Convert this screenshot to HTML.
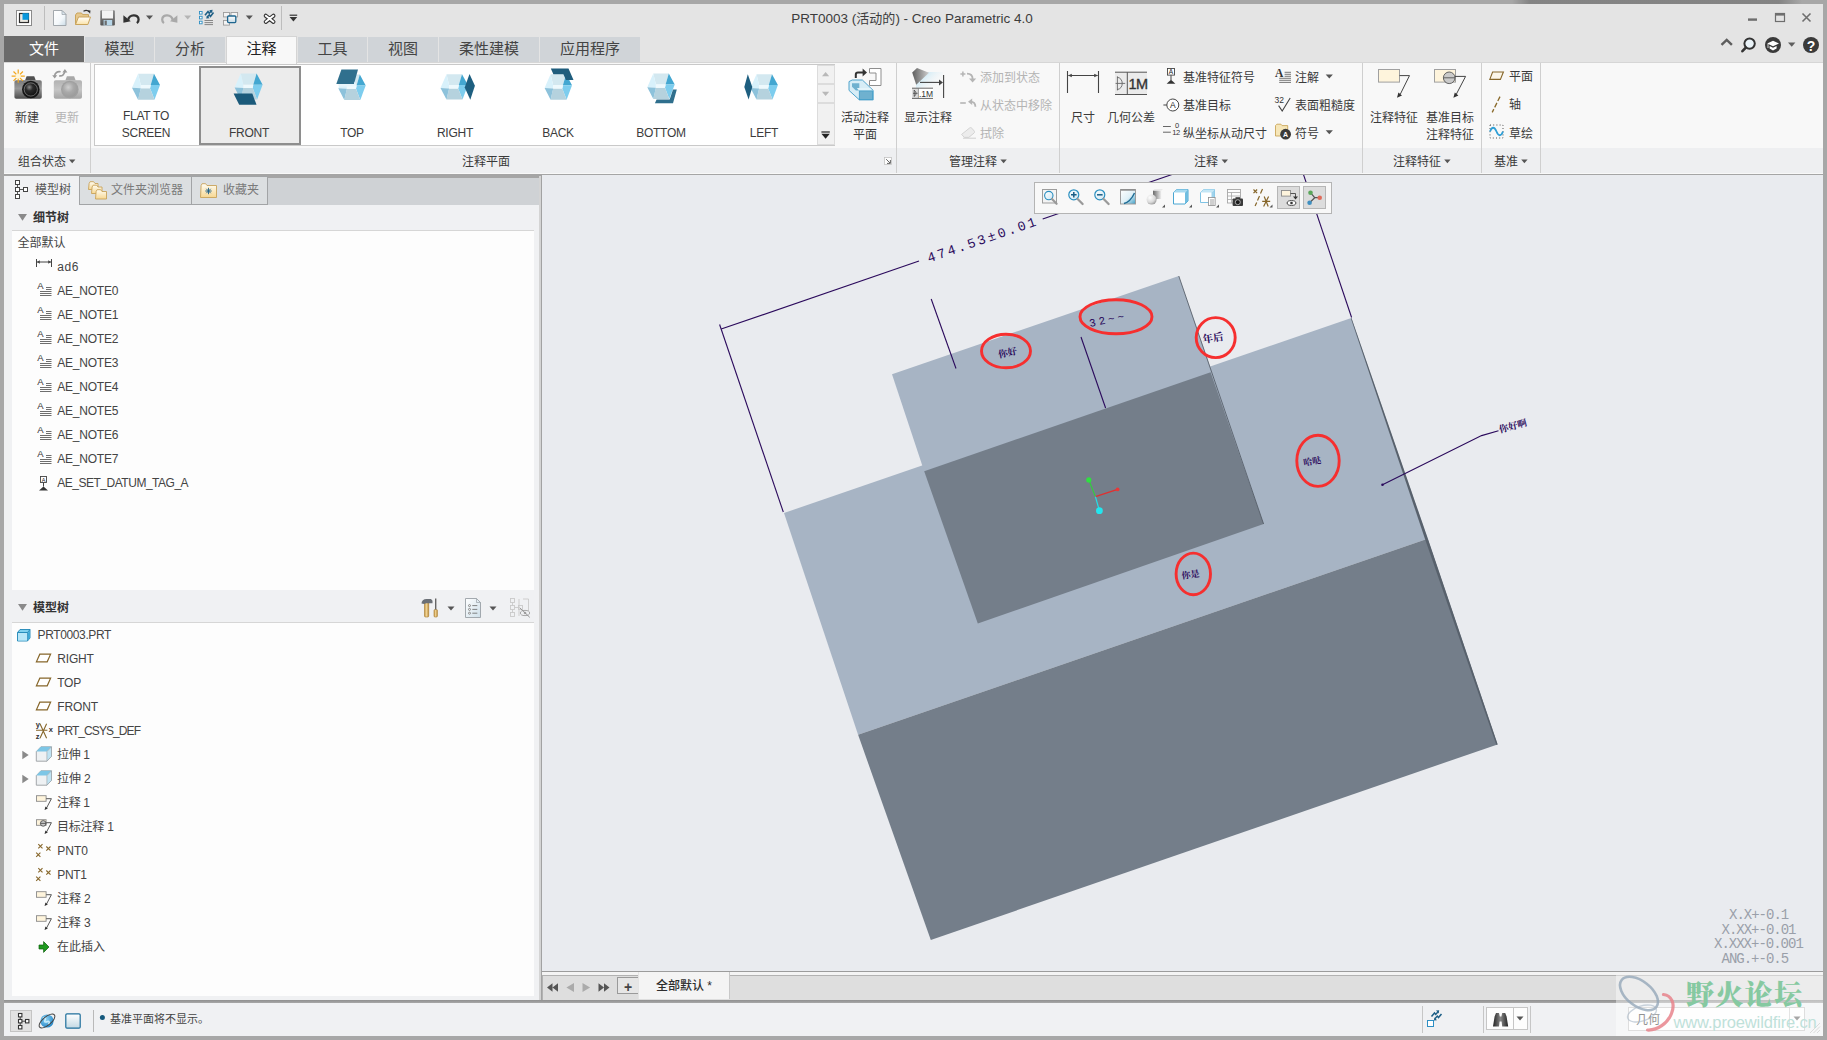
<!DOCTYPE html>
<html lang="zh-CN"><head><meta charset="utf-8"><title>PRT0003 - Creo Parametric 4.0</title>
<style>
*{box-sizing:border-box;margin:0;padding:0}
html,body{width:1827px;height:1040px;overflow:hidden}
body{position:relative;background:#a7a7a7;font-family:"Liberation Sans","Noto Sans CJK SC",sans-serif;font-size:12px;color:#3a3a3a;line-height:16px}
.a{position:absolute}
.t{position:absolute;white-space:nowrap;line-height:16px;height:16px;margin-top:1px}
.c{text-align:center}
.dis{color:#b4b4b4}
.sep{position:absolute;width:1px;background:#cfcfcf}
svg{position:absolute;overflow:visible}
.tab{position:absolute;top:37px;height:25px;background:#d0d4d8;text-align:center;font-size:15px;line-height:24px;color:#444}
.gl{position:absolute;white-space:nowrap;line-height:16px;height:16px;top:154px;text-align:center}
.row{position:absolute;white-space:nowrap;line-height:16px;height:16px;font-size:12.5px}
.gal{margin-top:0;font-size:12px;color:#3c3c3c;letter-spacing:-0.25px}

</style></head>
<body>
<!-- window frame -->
<div class="a" style="left:4px;top:4px;width:1819px;height:1032px;background:#e4e4e4"></div>
<!-- shadow strip on top border -->
<div class="a" style="left:1512px;top:0;width:290px;height:4px;background:linear-gradient(90deg,rgba(120,120,120,0),rgba(120,120,120,0.75) 6%,rgba(120,120,120,0.75) 92%,rgba(120,120,120,0))"></div>
<!-- title text -->
<div class="t c" id="title" style="left:712px;top:9px;width:400px;font-size:13.5px;line-height:18px;height:18px;color:#3c3c3c">PRT0003 (<span style="font-size:13px">活动的</span>) - Creo Parametric 4.0</div>
<!-- ribbon tabs -->
<div class="tab" style="left:4px;width:80px;background:#6a6a6a;color:#fff;top:36px;height:26px;line-height:25px">文件</div>
<div class="tab" style="left:85px;width:69px">模型</div>
<div class="tab" style="left:155px;width:70px">分析</div>
<div class="tab" style="left:226px;width:71px;background:#f8f8f8;color:#222;top:36px;height:27px;border:1px solid #d4d4d4;border-bottom:none;line-height:24px">注释</div>
<div class="tab" style="left:298px;width:69px">工具</div>
<div class="tab" style="left:368px;width:70px">视图</div>
<div class="tab" style="left:439px;width:100px">柔性建模</div>
<div class="tab" style="left:540px;width:100px">应用程序</div>
<!-- ribbon body -->
<div class="a" style="left:4px;top:62px;width:1819px;height:112px;background:#f8f8f8;border-top:1px solid #d6d6d6"></div>
<div class="a" style="left:226px;top:62px;width:71px;height:2px;background:#f8f8f8;border-left:1px solid #d4d4d4;border-right:1px solid #d4d4d4"></div>
<div class="a" style="left:4px;top:148px;width:1819px;height:25px;background:#eeeff1"></div>
<!-- quick access toolbar + window buttons -->
<svg class="a" style="left:0;top:0" width="1827" height="62" viewBox="0 0 1827 62">
<defs>
<linearGradient id="gdoc" x1="0" y1="0" x2="1" y2="1"><stop offset="0" stop-color="#ffffff"/><stop offset="0.6" stop-color="#f4f8fb"/><stop offset="1" stop-color="#c9dbe6"/></linearGradient>
<linearGradient id="gfold" x1="0" y1="0" x2="0" y2="1"><stop offset="0" stop-color="#ffffff"/><stop offset="1" stop-color="#fbe3a8"/></linearGradient>
<linearGradient id="gsave" x1="0" y1="0" x2="0" y2="1"><stop offset="0" stop-color="#8c8c8c"/><stop offset="1" stop-color="#555"/></linearGradient>
<linearGradient id="gwin" x1="0" y1="0" x2="0" y2="1"><stop offset="0" stop-color="#ffffff"/><stop offset="1" stop-color="#c4d9e4"/></linearGradient>
</defs>
<!-- app icon -->
<rect x="16.5" y="10.5" width="15" height="15" fill="#fff" stroke="#8a8a8a"/>
<rect x="19.5" y="13.5" width="9" height="9" fill="#ece9e2" stroke="#2e2e2e" stroke-width="1.2"/>
<rect x="22.5" y="13.2" width="6.3" height="6.6" fill="#0a98dc"/>
<rect x="44" y="6" width="1" height="24" fill="#bdbdbd"/>
<!-- new doc -->
<path d="M53.5 10.5h8.5l4 4v11h-12.5z" fill="url(#gdoc)" stroke="#9aa0a6" stroke-width="0.9"/>
<path d="M62 10.5v4h4z" fill="#dbe6ee" stroke="#9aa0a6" stroke-width="0.7"/>
<!-- open folder -->
<path d="M75.5 24.5v-9.5l1.5-2h4.5l1.2 1.6h5.8v3" fill="#e6c88e" stroke="#c9a45c"/>
<path d="M75.5 24.5l3-7.5h12l-2.6 7.5z" fill="url(#gfold)" stroke="#c9a45c"/>
<path d="M83.5 11.2c2.2-1.2 4.4-.8 5.6.6" fill="none" stroke="#333" stroke-width="1.3"/>
<path d="M87.3 10.2l3.2.2-.4 3.4z" fill="#333"/>
<!-- save -->
<rect x="100.3" y="10.3" width="14.6" height="15.2" rx="1" fill="url(#gsave)"/>
<rect x="102" y="10.3" width="11" height="8.2" fill="#f3f3f3"/>
<rect x="103.6" y="20" width="8.6" height="5.5" fill="#b7d6e8"/>
<rect x="104.6" y="20.6" width="2.2" height="4.4" fill="#6d6d6d"/>
<!-- undo -->
<path d="M128.200 20c.400-5.800 10.400-6.600 10.400-.400c0 1.600-.600 2.700-1.700 3.500" fill="none" stroke="#333" stroke-width="2.300"/>
<path d="M123.400 15.200v7.600l7.400-1.600z" fill="#333"/>
<path d="M146 15.600h7l-3.500 4z" fill="#555"/>
<!-- redo (disabled) -->
<path d="M172.600 20c-.400-5.800-10.400-6.600-10.400-.400c0 1.600.600 2.700 1.700 3.500" fill="none" stroke="#a9a9a9" stroke-width="2.300"/>
<path d="M177.400 15.200v7.600l-7.400-1.600z" fill="#a9a9a9"/>
<path d="M184.200 15.600h7l-3.500 4z" fill="#b5b5b5"/>
<!-- regenerate -->
<g fill="#fff" stroke="#2d8fc4" stroke-width="0.9"><rect x="199.5" y="11.5" width="2.6" height="2.6"/><rect x="199.5" y="16.3" width="2.6" height="2.6"/><rect x="199.5" y="21.2" width="2.6" height="2.6"/></g>
<g stroke="#7a7a7a" stroke-width="0.9"><path d="M204.5 20.5h8.5M204.5 22.6h8.5M204.5 24.6h8.5"/></g>
<path d="M205 15.2l3-3.6 1.2 1.6 2.4-2.8M213.5 12.6l-3 3.8-1.2-1.6-2.2 2.4" fill="none" stroke="#1d5f86" stroke-width="1.6"/>
<path d="M209.2 10.2l3.4-.4-.6 3.4zM209.6 18.2l-3.4.4.8-3.2z" fill="#1d5f86"/>
<!-- windows -->
<g fill="#f4f4f4" stroke="#9b9b9b" stroke-width="0.9"><rect x="223.5" y="12.5" width="6" height="4.4"/><rect x="231" y="12.5" width="6.6" height="4.4"/><rect x="223.5" y="20.5" width="6" height="4.6"/></g>
<rect x="227.6" y="16" width="8.2" height="6.6" rx="1" fill="url(#gwin)" stroke="#1e668f" stroke-width="1.3"/>
<path d="M245.8 15.6h7l-3.5 4z" fill="#555"/>
<!-- close x -->
<path d="M265.800 15.800l7.600 6M273.400 15.800l-7.600 6" stroke="#333" stroke-width="4.200" stroke-linecap="round"/>
<path d="M265.800 15.800l7.600 6M273.400 15.800l-7.600 6" stroke="#fff" stroke-width="2" stroke-linecap="round"/>
<rect x="281" y="6" width="1" height="24" fill="#bdbdbd"/>
<rect x="289.6" y="14.6" width="7.6" height="1.2" fill="#333"/>
<path d="M289.6 17h7.6l-3.8 4.6z" fill="#333"/>
<!-- window buttons -->
<rect x="1748" y="18.400" width="9" height="2.400" fill="#6e6e6e"/>
<rect x="1775.5" y="13.5" width="9" height="8" fill="none" stroke="#6e6e6e" stroke-width="1.2"/><rect x="1775" y="13" width="10" height="2.6" fill="#6e6e6e"/>
<path d="M1802.5 13.5l8 8M1810.5 13.5l-8 8" stroke="#6e6e6e" stroke-width="1.6"/>
<!-- help row -->
<path d="M1721.5 44.8l5.2-5 5.2 5" fill="none" stroke="#5e5e5e" stroke-width="2.4"/>
<circle cx="1749.6" cy="43.6" r="5.2" fill="#eaf3f8" stroke="#333" stroke-width="2"/>
<path d="M1745.8 47.6l-3.4 3.6" stroke="#333" stroke-width="2.6" stroke-linecap="round"/>
<circle cx="1773" cy="45" r="8" fill="#3a3a3a"/>
<path d="M1767.2 43.4l5.8-2.6 6 2.6-6 2.8z" fill="#fff"/>
<path d="M1769.6 46v2.6l3.4 1.8 3.6-1.8v-2.6l-3.6 1.8z" fill="#fff"/>
<path d="M1768 44v4" stroke="#fff" stroke-width="0.8"/>
<path d="M1788 42.6h7.4l-3.7 4.2z" fill="#5e5e5e"/>
<circle cx="1811" cy="45" r="8" fill="#3a3a3a"/>
</svg>
<div class="t c" style="left:1803px;top:36px;width:16px;font-size:14px;font-weight:bold;color:#fff;line-height:18px;height:18px">?</div>
<!-- annotation plane gallery -->
<div class="a" style="left:94px;top:64px;width:741px;height:82px;background:#fff;border:1px solid #c9c9c9"></div>
<div class="a" style="left:199px;top:66px;width:102px;height:79px;background:#ececec;border:2px solid #8e8e8e"></div>
<svg class="a" style="left:0;top:62px" width="900" height="90" viewBox="0 62 900 90">
<polygon points="138.1,73.7 154.0,73.7 150.7,84.9 140.8,84.9" fill="#d3e8f0"/><polygon points="132.0,87.7 138.1,73.7 140.8,84.9 140.8,88.2" fill="#d8f1fb"/><polygon points="154.0,73.7 160.0,84.9 150.7,84.9" fill="#43a7d1"/><polygon points="150.7,84.9 160.0,84.9 154.5,99.7 150.1,88.2" fill="#7dcdee"/><polygon points="140.8,88.2 150.1,88.2 154.5,99.7 138.1,99.7" fill="#b5d2de"/><polygon points="132.0,87.7 140.8,88.2 138.1,99.7" fill="#8dc2db"/><polygon points="140.8,84.9 150.7,84.9 150.1,88.2 140.8,88.2" fill="#eef9fd"/>
<polygon points="240.7,73.5 256.6,73.5 253.3,84.7 243.4,84.7" fill="#d3e8f0"/><polygon points="234.6,87.5 240.7,73.5 243.4,84.7 243.4,88.0" fill="#d8f1fb"/><polygon points="256.6,73.5 262.6,84.7 253.3,84.7" fill="#43a7d1"/><polygon points="253.3,84.7 262.6,84.7 257.1,99.5 252.7,88.0" fill="#7dcdee"/><polygon points="243.4,88.0 252.7,88.0 257.1,99.5 240.7,99.5" fill="#b5d2de"/><polygon points="234.6,87.5 243.4,88.0 240.7,99.5" fill="#8dc2db"/><polygon points="243.4,84.7 253.3,84.7 252.7,88.0 243.4,88.0" fill="#eef9fd"/>
<polygon points="233.6,93.4 252.3,93.4 256.5,104.8 239.2,104.8" fill="#1b5a7a"/>
<polygon points="344.3,74.5 359.8,74.5 356.6,85.4 346.9,85.4" fill="#d3e8f0"/><polygon points="338.3,88.2 344.3,74.5 346.9,85.4 346.9,88.7" fill="#d8f1fb"/><polygon points="359.8,74.5 365.7,85.4 356.6,85.4" fill="#43a7d1"/><polygon points="356.6,85.4 365.7,85.4 360.3,99.9 356.0,88.7" fill="#7dcdee"/><polygon points="346.9,88.7 356.0,88.7 360.3,99.9 344.3,99.9" fill="#b5d2de"/><polygon points="338.3,88.2 346.9,88.7 344.3,99.9" fill="#8dc2db"/><polygon points="346.9,85.4 356.6,85.4 356.0,88.7 346.9,88.7" fill="#eef9fd"/>
<polygon points="341.4,69.6 358.0,69.6 354.0,84.0 336.3,84.0" fill="#30708e"/>
<polygon points="338.5,84.0 354.0,84.0 354.6,81.6 356.2,84.6 354.2,86.6 338.5,86.6" fill="#e6f5fb"/>
<polygon points="446.5,74.2 462.0,74.2 458.8,85.1 449.1,85.1" fill="#d3e8f0"/><polygon points="440.5,87.9 446.5,74.2 449.1,85.1 449.1,88.4" fill="#d8f1fb"/><polygon points="462.0,74.2 467.9,85.1 458.8,85.1" fill="#43a7d1"/><polygon points="458.8,85.1 467.9,85.1 462.5,99.6 458.2,88.4" fill="#7dcdee"/><polygon points="449.1,88.4 458.2,88.4 462.5,99.6 446.5,99.6" fill="#b5d2de"/><polygon points="440.5,87.9 449.1,88.4 446.5,99.6" fill="#8dc2db"/><polygon points="449.1,85.1 458.8,85.1 458.2,88.4 449.1,88.4" fill="#eef9fd"/>
<polygon points="469.5,73.9 474.9,85.8 470.3,99.7 464.7,87.4" fill="#1e5f80"/>
<polygon points="550.6,74.3 566.1,74.3 562.9,85.2 553.2,85.2" fill="#d3e8f0"/><polygon points="544.6,88.0 550.6,74.3 553.2,85.2 553.2,88.5" fill="#d8f1fb"/><polygon points="566.1,74.3 572.0,85.2 562.9,85.2" fill="#43a7d1"/><polygon points="562.9,85.2 572.0,85.2 566.6,99.7 562.3,88.5" fill="#7dcdee"/><polygon points="553.2,88.5 562.3,88.5 566.6,99.7 550.6,99.7" fill="#b5d2de"/><polygon points="544.6,88.0 553.2,88.5 550.6,99.7" fill="#8dc2db"/><polygon points="553.2,85.2 562.9,85.2 562.3,88.5 553.2,88.5" fill="#eef9fd"/>
<polygon points="550.8,68.5 568.5,68.5 573.5,80.0 566.0,80.0 563.4,74.3 553.4,74.3" fill="#1f5d7d"/>
<polygon points="653.3,73.5 668.8,73.5 665.6,84.4 655.9,84.4" fill="#d3e8f0"/><polygon points="647.3,87.2 653.3,73.5 655.9,84.4 655.9,87.7" fill="#d8f1fb"/><polygon points="668.8,73.5 674.7,84.4 665.6,84.4" fill="#43a7d1"/><polygon points="665.6,84.4 674.7,84.4 669.3,98.9 665.0,87.7" fill="#7dcdee"/><polygon points="655.9,87.7 665.0,87.7 669.3,98.9 653.3,98.9" fill="#b5d2de"/><polygon points="647.3,87.2 655.9,87.7 653.3,98.9" fill="#8dc2db"/><polygon points="655.9,84.4 665.6,84.4 665.0,87.7 655.9,87.7" fill="#eef9fd"/>
<polygon points="676.8,89.4 673.0,103.3 654.9,103.3 656.6,99.5 669.7,99.5 673.0,89.4" fill="#2f6f8d"/>
<polygon points="756.5,74.2 772.0,74.2 768.8,85.1 759.1,85.1" fill="#d3e8f0"/><polygon points="750.5,87.9 756.5,74.2 759.1,85.1 759.1,88.4" fill="#d8f1fb"/><polygon points="772.0,74.2 777.9,85.1 768.8,85.1" fill="#43a7d1"/><polygon points="768.8,85.1 777.9,85.1 772.5,99.6 768.2,88.4" fill="#7dcdee"/><polygon points="759.1,88.4 768.2,88.4 772.5,99.6 756.5,99.6" fill="#b5d2de"/><polygon points="750.5,87.9 759.1,88.4 756.5,99.6" fill="#8dc2db"/><polygon points="759.1,85.1 768.8,85.1 768.2,88.4 759.1,88.4" fill="#eef9fd"/>
<polygon points="747.8,74.3 752.3,86.9 748.6,99.5 744.3,86.9" fill="#1e5f80"/>
<rect x="817.5" y="65.5" width="17" height="18" fill="#f1f1f1" stroke="#dcdcdc"/>
<rect x="817.5" y="84.5" width="17" height="18" fill="#f1f1f1" stroke="#dcdcdc"/>
<rect x="817.5" y="103.5" width="17" height="41" fill="#f1f1f1" stroke="#dcdcdc"/>
<path d="M822 76.3l3.6-4.2 3.6 4.2z" fill="#b8b8b8"/>
<path d="M822 91.8h7.2l-3.6 4.2z" fill="#b8b8b8"/>
<rect x="821.4" y="131.4" width="8.4" height="1.2" fill="#222"/><path d="M821.4 133.8h8.4l-4.2 5z" fill="#222"/>
</svg>
<div class="t c gal" style="left:96px;top:108px;width:100px">FLAT TO</div>
<div class="t c gal" style="left:96px;top:125px;width:100px">SCREEN</div>
<div class="t c gal" style="left:199px;top:125px;width:100px">FRONT</div>
<div class="t c gal" style="left:302px;top:125px;width:100px">TOP</div>
<div class="t c gal" style="left:405px;top:125px;width:100px">RIGHT</div>
<div class="t c gal" style="left:508px;top:125px;width:100px">BACK</div>
<div class="t c gal" style="left:611px;top:125px;width:100px">BOTTOM</div>
<div class="t c gal" style="left:714px;top:125px;width:100px">LEFT</div>
<!-- ribbon: group separators -->
<div class="sep" style="left:90px;top:63px;height:110px"></div>
<div class="sep" style="left:896px;top:63px;height:110px"></div>
<div class="sep" style="left:1059px;top:63px;height:110px"></div>
<div class="sep" style="left:1362px;top:63px;height:110px"></div>
<div class="sep" style="left:1481px;top:63px;height:110px"></div>
<div class="sep" style="left:1540px;top:63px;height:110px"></div>
<!-- ribbon icons -->
<svg class="a" style="left:0;top:62px" width="1827" height="112" viewBox="0 62 1827 112">
<defs>
<linearGradient id="gcam" x1="0" y1="0" x2="0" y2="1"><stop offset="0" stop-color="#777"/><stop offset="0.45" stop-color="#999"/><stop offset="1" stop-color="#4c4c4c"/></linearGradient>
<radialGradient id="glens" cx="0.4" cy="0.35" r="0.7"><stop offset="0" stop-color="#8a8a8a"/><stop offset="0.35" stop-color="#2b2b2b"/><stop offset="1" stop-color="#0c0c0c"/></radialGradient>
<linearGradient id="gcam2" x1="0" y1="0" x2="0" y2="1"><stop offset="0" stop-color="#b2b2b2"/><stop offset="0.5" stop-color="#c6c6c6"/><stop offset="1" stop-color="#a4a4a4"/></linearGradient>
<radialGradient id="glens2" cx="0.4" cy="0.35" r="0.7"><stop offset="0" stop-color="#cfcfcf"/><stop offset="0.5" stop-color="#a9a9a9"/><stop offset="1" stop-color="#9a9a9a"/></radialGradient>
<linearGradient id="glamp" x1="0" y1="0" x2="1" y2="0"><stop offset="0" stop-color="#5e5e5e"/><stop offset="1" stop-color="#cfcfcf"/></linearGradient>
<linearGradient id="gbeam" x1="0" y1="0" x2="1" y2="0.6"><stop offset="0" stop-color="#a9def4"/><stop offset="1" stop-color="#f8f8f8" stop-opacity="0"/></linearGradient>
</defs>
<!-- camera new -->
<path d="M25 80.600l1.600-4.400h7.600l1.600 4.400z" fill="#505050"/>
<rect x="14.400" y="80.200" width="27.400" height="18.600" rx="1.800" fill="url(#gcam)"/>
<circle cx="30.800" cy="89.500" r="8.800" fill="#161616"/>
<circle cx="30.800" cy="89.500" r="7.400" fill="url(#glens)"/>
<circle cx="30.800" cy="89.500" r="6.600" fill="none" stroke="#8c8c8c" stroke-opacity="0.700" stroke-width="1"/>
<g stroke="#f3a71c" stroke-width="1.200"><path d="M18.200 69.600v13.200M11.600 76.200h13.200M13.500 71.500l9.400 9.400M22.900 71.500l-9.400 9.400"/></g>
<circle cx="18.200" cy="76.200" r="2.600" fill="#fff6d8"/>
<!-- camera update (disabled) -->
<path d="M65.300 80.600l1.600-4.400h7.200l1.600 4.400z" fill="#a8a8a8"/>
<rect x="53.800" y="80.200" width="28.200" height="18.600" rx="1.800" fill="url(#gcam2)"/>
<circle cx="69.800" cy="89.500" r="8.800" fill="#a0a0a0"/>
<circle cx="69.800" cy="89.500" r="7.400" fill="url(#glens2)"/>
<path d="M54.600 76.400c0-3.600 3-5.400 6-4.600M64.800 70.800c0 3.600-2.600 5.600-5.600 5" fill="none" stroke="#9a9a9a" stroke-width="1.700"/>
<path d="M52.200 75.200h5l-2.500 3.400zM67.400 72.400h-5l2.500-3.400z" fill="#9a9a9a"/>
<!-- active annotation plane -->
<path d="M855.8 78v-3.2c0-1.4.8-2.2 2.2-2.2h5.6" fill="none" stroke="#333" stroke-width="2"/>
<path d="M862.6 68.6l4.4 4-4.4 4z" fill="#333"/>
<path d="M869.5 68.5h11.5v17h-11.5v-5h6.5v-7.5h-6.5z" fill="#fff" stroke="#8e8e8e"/>
<path d="M849 81.600l3.200-1.600h10.200l10.800 10.400v9.500h-13.800l-10.400-9.500z" fill="#d7edf6" stroke="#3f9bc7" stroke-width="0.900" stroke-linejoin="round"/>
<path d="M852 83.200h7.300v7.200h-3.400l-3.900-3.600z" fill="#6fb1cf"/>
<path d="M856.900 87.900h13.200l2.400 3h-13.200z" fill="#e4f4fa"/>
<rect x="859.300" y="90.900" width="13.200" height="8.700" fill="#6fb1cf" stroke="#3f9bc7" stroke-width="0.800"/>
<!-- show annotations -->
<path d="M916 72l27 0 0 13-27 3z" fill="url(#gbeam)"/>
<path d="M912.2 72.4l4.8-4.4 12 4.8-12.8 12z" fill="url(#glamp)"/>
<path d="M920 82.4h20.5" stroke="#444" stroke-width="1.1"/>
<path d="M939 79.4l4 3-4 3z" fill="#444"/>
<path d="M943.6 75v23" stroke="#444" stroke-width="1.1"/>
<rect x="912" y="88.2" width="21" height="10" fill="#fff"/>
<rect x="912" y="88.2" width="6.4" height="10" fill="#dcdcdc"/>
<path d="M912 88.2h21M912 98.4h21" stroke="#555" stroke-width="0.9"/>
<path d="M918.4 88.2v10" stroke="#777" stroke-width="0.7"/>
<path d="M914 90.4c2.6.4 2.6 5.4 0 5.8M913 93.3h4.6M914.2 90v6.6" fill="none" stroke="#444" stroke-width="0.8"/>
<!-- add to state (disabled) -->
<path d="M960.4 74h5M962.9 71.6v4.8" stroke="#b5b5b5" stroke-width="1.5"/>
<path d="M967 73.6c3.400 0 5.600 1.600 5.600 5.400" fill="none" stroke="#b5b5b5" stroke-width="1.8"/>
<path d="M969 78.400h7.200l-3.600 4z" fill="#b5b5b5"/>
<!-- remove from state -->
<path d="M960.200 103h5.600" stroke="#b5b5b5" stroke-width="1.6"/>
<path d="M975.400 106.800c0-3.400-1.800-5.200-5.200-5.200" fill="none" stroke="#b5b5b5" stroke-width="1.8"/>
<path d="M972.200 98.400v6.600l-4.200-3.300z" fill="#b5b5b5"/>
<!-- erase -->
<path d="M961.600 134.400l8-6.400c.8-.6 1.600-.6 2.200.2l2.400 2.800c.600.800.500 1.500-.2 2.100l-5.200 4.300h-4.400z" fill="#ececec" stroke="#cfcfcf" stroke-width="0.9"/>
<path d="M963 138.200h13" stroke="#cfcfcf"/>
<!-- dimension -->
<path d="M1067.500 71v22M1098.500 71v22M1068.500 75.500h29" stroke="#444" stroke-width="1.100"/>
<path d="M1068 75.500l3.800-1.800v3.600zM1098 75.500l-3.800-1.800v3.600z" fill="#444"/>
<!-- geometric tolerance -->
<rect x="1115" y="72.200" width="32" height="22.300" fill="#ebebeb"/>
<path d="M1115 72.200h32M1115 94.500h32M1127.300 72.200v22.300" stroke="#555" stroke-width="1"/>
<path d="M1117 77.200c7 .6 7 11.800 0 12.400M1115.600 83.400h9.600M1117.400 76.400v14" fill="none" stroke="#666" stroke-width="0.9"/>
<!-- datum feature symbol -->
<rect x="1167.500" y="68.500" width="7" height="6.600" fill="#fff" stroke="#444" stroke-width="0.9"/>
<path d="M1171 75.200v5" stroke="#444"/>
<path d="M1166.600 83.800l4.400-4 4.400 4z" fill="#333"/>
<!-- datum target -->
<circle cx="1172.800" cy="105" r="6" fill="#fff" stroke="#444" stroke-width="1"/>
<path d="M1163.400 105h3.400" stroke="#444"/>
<!-- ordinate driven -->
<path d="M1163 126.500h7.800M1163 132.200h7.800" stroke="#555" stroke-width="0.9"/>
<!-- note -->
<path d="M1284.600 72.300h6.400M1284.600 74.300h6.400M1284.600 76.300h6.400M1279.200 78.300h11.800M1279.200 80.300h11.800M1279.200 82.400h11.800" stroke="#555" stroke-width="0.8"/>
<path d="M1329.300 78.400l-3.600-4h7.200z" fill="#555"/>
<!-- surface finish -->
<path d="M1278.600 105.600l3.600 5.400 8-13" fill="none" stroke="#444" stroke-width="1.100"/>
<!-- symbol -->
<path d="M1275.500 136v-10.400l1.400-1.400h4l1.200 1.400h5.600v10.400z" fill="#f6e6b8" stroke="#caa65a" stroke-width="0.9"/>
<circle cx="1285.600" cy="134.200" r="5.400" fill="#3a3a3a"/>
<path d="M1329.300 134.200l-3.600-4h7.200z" fill="#555"/>
<!-- annotation feature -->
<rect x="1378.500" y="69.500" width="21" height="12.600" fill="#fef4dc" stroke="#a0a0a0"/>
<path d="M1399.500 75.600h10l-9.400 19" fill="none" stroke="#444" stroke-width="1"/>
<path d="M1397 97.800l1.400-5.200 3.600 3z" fill="#333"/>
<!-- datum target annotation feature -->
<rect x="1434.500" y="69.500" width="21" height="12.600" fill="#fef4dc" stroke="#a0a0a0"/>
<circle cx="1449.200" cy="77.800" r="5.800" fill="#cacaca" stroke="#555" stroke-width="0.9"/>
<path d="M1443.400 77.800h11.600" stroke="#555" stroke-width="0.9"/>
<path d="M1455 76.400h10.600l-9.600 18.400" fill="none" stroke="#444" stroke-width="1"/>
<path d="M1453.400 97.800l1.400-5.200 3.600 3z" fill="#333"/>
<!-- plane -->
<path d="M1492.600 72h10.800l-3 7.400h-10.600z" fill="#fbf6ea" stroke="#86662a" stroke-width="1.100"/>
<!-- axis -->
<path d="M1500 96.600l-7.800 15.800" stroke="#8a6a2a" stroke-width="1.300" stroke-dasharray="5 2"/>
<!-- sketch -->
<rect x="1490" y="125" width="13" height="13" fill="none" stroke="#555" stroke-width="1" stroke-dasharray="1 2.200"/>
<path d="M1490 131.500c2-5 4.400-5 6.500 0s4.500 5 6.500 0" fill="none" stroke="#2f9fd6" stroke-width="1.800"/>
<!-- group label arrows -->
<g fill="#555"><path d="M69 159.400h6.400l-3.200 3.800z"/><path d="M1000.400 159.400h6.400l-3.200 3.800z"/><path d="M1221.600 159.400h6.400l-3.200 3.800z"/><path d="M1444.200 159.400h6.400l-3.200 3.800z"/><path d="M1521.200 159.400h6.400l-3.200 3.800z"/></g>
<!-- dialog launcher -->
<rect x="884.500" y="157.500" width="7" height="7" fill="#fdfdfd" stroke="#c2c2c2" stroke-width="0.800"/>
<path d="M886.200 159.200l3.800 3.800M890.400 160v3.400h-3.400" fill="none" stroke="#555" stroke-width="0.900"/>
</svg>
<!-- tiny texts inside icons -->
<div class="t" style="left:919px;top:86px;font-size:8.500px;color:#333;letter-spacing:0;line-height:14px;height:14px">.1M</div>
<div class="t" style="left:1128.500px;top:74px;font-size:14.500px;color:#333;letter-spacing:-0.500px;line-height:18px;height:18px;-webkit-text-stroke:0.350px #333">1M</div>
<div class="t c" style="left:1166px;top:64.300px;width:10px;font-size:6.500px;color:#222;line-height:14px;height:14px">A</div>
<div class="t c" style="left:1167.800px;top:97px;width:10px;font-size:8.500px;color:#222;line-height:14px;height:14px">A</div>
<div class="t" style="left:1175px;top:121px;font-size:7.500px;color:#333;line-height:8px;height:8px">0</div>
<div class="t" style="left:1172.300px;top:127.500px;font-size:7.500px;color:#333;line-height:8px;height:8px;letter-spacing:-0.500px">12</div>
<div class="t" style="left:1275px;top:65px;font-size:11.500px;font-weight:bold;font-family:'Liberation Serif',serif;color:#333;line-height:14px;height:14px">A</div>
<div class="t" style="left:1274.500px;top:95px;font-size:8.500px;color:#333;line-height:9px;height:9px">32</div>
<div class="t c" style="left:1280.600px;top:127.500px;width:10px;font-size:7px;font-weight:bold;color:#fff;line-height:11px;height:11px">A</div>
<!-- ribbon texts -->
<div class="t c" style="left:2px;top:109px;width:50px">新建</div>
<div class="t c dis" style="left:42px;top:109px;width:50px">更新</div>
<div class="t c" style="left:835px;top:109px;width:60px">活动注释</div>
<div class="t c" style="left:835px;top:126px;width:60px">平面</div>
<div class="t c" style="left:898px;top:109px;width:60px">显示注释</div>
<div class="t dis" style="left:980px;top:69px">添加到状态</div>
<div class="t dis" style="left:980px;top:97px">从状态中移除</div>
<div class="t dis" style="left:980px;top:125px">拭除</div>
<div class="t c" style="left:1053px;top:109px;width:60px">尺寸</div>
<div class="t c" style="left:1101px;top:109px;width:60px">几何公差</div>
<div class="t" style="left:1183px;top:69px">基准特征符号</div>
<div class="t" style="left:1183px;top:97px">基准目标</div>
<div class="t" style="left:1183px;top:125px">纵坐标从动尺寸</div>
<div class="t" style="left:1295px;top:69px">注解</div>
<div class="t" style="left:1295px;top:97px">表面粗糙度</div>
<div class="t" style="left:1295px;top:125px">符号</div>
<div class="t c" style="left:1364px;top:109px;width:60px">注释特征</div>
<div class="t c" style="left:1420px;top:109px;width:60px">基准目标</div>
<div class="t c" style="left:1420px;top:126px;width:60px">注释特征</div>
<div class="t" style="left:1509px;top:68px">平面</div>
<div class="t" style="left:1509px;top:96px">轴</div>
<div class="t" style="left:1509px;top:125px">草绘</div>
<!-- group labels -->
<div class="gl" style="left:18px">组合状态</div>
<div class="gl" style="left:462px">注释平面</div>
<div class="gl" style="left:949px">管理注释</div>
<div class="gl" style="left:1194px">注释</div>
<div class="gl" style="left:1393px">注释特征</div>
<div class="gl" style="left:1494px">基准</div>
<!-- left navigator panel -->
<div class="a" style="left:4px;top:174px;width:1819px;height:1px;background:#a5a5a5"></div>
<div class="a" style="left:4px;top:175px;width:538px;height:1px;background:#a5a5a5"></div>
<div class="a" style="left:4px;top:176px;width:536px;height:825px;background:#f0f1f3"></div>
<div class="a" style="left:4px;top:176px;width:536px;height:29px;background:#cfd2d5;border-top:2px solid #a5a5a5"></div>
<div class="a" style="left:4px;top:176px;width:75px;height:30px;background:#f0f1f3"></div>
<div class="a" style="left:79px;top:176px;width:113px;height:29px;background:#dcdfe1;border:1px solid #a2a4a6"></div>
<div class="a" style="left:191px;top:176px;width:77px;height:29px;background:#dcdfe1;border:1px solid #a2a4a6"></div>
<div class="t" style="left:35px;top:181px;color:#555">模型树</div>
<div class="t" style="left:111px;top:181px;color:#7a7a7a">文件夹浏览器</div>
<div class="t" style="left:223px;top:181px;color:#7a7a7a">收藏夹</div>
<div class="t" style="left:33px;top:209px;font-weight:bold;color:#333">细节树</div>
<div class="t" style="left:33px;top:599px;font-weight:bold;color:#333">模型树</div>
<div class="a" style="left:12px;top:230px;width:522px;height:360px;background:#fdfdfd;border-top:1px solid #d6d6d6"></div>
<div class="a" style="left:12px;top:622px;width:522px;height:374px;background:#fdfdfd;border-top:1px solid #d6d6d6"></div>
<div class="a" style="left:539px;top:176px;width:2px;height:825px;background:#d4d4d4"></div>
<div class="a" style="left:541px;top:175px;width:1px;height:826px;background:#a2a2a2"></div>
<div class="t" style="left:17.5px;top:234px;color:#444">全部默认</div>
<div class="t" style="left:57.3px;top:258px;color:#444;letter-spacing:0.56px">ad6</div>
<div class="t" style="left:57.2px;top:282px;color:#444;letter-spacing:-0.21px">AE_NOTE0</div>
<div class="t" style="left:57.2px;top:306px;color:#444;letter-spacing:-0.21px">AE_NOTE1</div>
<div class="t" style="left:57.2px;top:330px;color:#444;letter-spacing:-0.21px">AE_NOTE2</div>
<div class="t" style="left:57.2px;top:354px;color:#444;letter-spacing:-0.21px">AE_NOTE3</div>
<div class="t" style="left:57.2px;top:378px;color:#444;letter-spacing:-0.21px">AE_NOTE4</div>
<div class="t" style="left:57.2px;top:402px;color:#444;letter-spacing:-0.21px">AE_NOTE5</div>
<div class="t" style="left:57.2px;top:426px;color:#444;letter-spacing:-0.21px">AE_NOTE6</div>
<div class="t" style="left:57.2px;top:450px;color:#444;letter-spacing:-0.21px">AE_NOTE7</div>
<div class="t" style="left:57.2px;top:474px;color:#444;letter-spacing:-0.48px">AE_SET_DATUM_TAG_A</div>
<div class="t" style="left:37.5px;top:626px;color:#444;letter-spacing:-0.37px">PRT0003.PRT</div>
<div class="t" style="left:57.3px;top:650px;color:#444;letter-spacing:-0.19px">RIGHT</div>
<div class="t" style="left:57.3px;top:674px;color:#444;letter-spacing:-0.29px">TOP</div>
<div class="t" style="left:57.3px;top:698px;color:#444;letter-spacing:-0.14px">FRONT</div>
<div class="t" style="left:57.3px;top:722px;color:#444;letter-spacing:-0.92px">PRT_CSYS_DEF</div>
<div class="t" style="left:57px;top:746px;color:#444;letter-spacing:-0.35px">拉伸 1</div>
<div class="t" style="left:57px;top:770px;color:#444;letter-spacing:-0.1px">拉伸 2</div>
<div class="t" style="left:57px;top:794px;color:#444;letter-spacing:-0.35px">注释 1</div>
<div class="t" style="left:57px;top:818px;color:#444;letter-spacing:-0.22px">目标注释 1</div>
<div class="t" style="left:57.3px;top:842px;color:#444;letter-spacing:-0.04px">PNT0</div>
<div class="t" style="left:57.3px;top:866px;color:#444;letter-spacing:-0.32px">PNT1</div>
<div class="t" style="left:57px;top:890px;color:#444;letter-spacing:-0.1px">注释 2</div>
<div class="t" style="left:57px;top:914px;color:#444;letter-spacing:-0.15px">注释 3</div>
<div class="t" style="left:57px;top:938px;color:#444">在此插入</div>
<svg class="a" style="left:0;top:174px" width="545" height="830" viewBox="0 174 545 830">
<defs><linearGradient id="gfd" x1="0" y1="0" x2="0" y2="1"><stop offset="0" stop-color="#fffdf4"/><stop offset="1" stop-color="#f7d791"/></linearGradient>
<linearGradient id="gpg" x1="0" y1="0" x2="1" y2="1"><stop offset="0" stop-color="#ffffff"/><stop offset="1" stop-color="#cfe0ea"/></linearGradient>
<linearGradient id="ghm" x1="0" y1="0" x2="1" y2="0"><stop offset="0" stop-color="#c79a4a"/><stop offset="0.5" stop-color="#f1d596"/><stop offset="1" stop-color="#b98732"/></linearGradient></defs>
<g fill="#fff" stroke="#444" stroke-width="1"><rect x="15.5" y="180.500" width="4" height="4"/><rect x="15.5" y="187.500" width="4" height="4"/><rect x="15.5" y="194.500" width="4" height="4"/><rect x="23.5" y="187.500" width="4" height="4"/></g>
<path d="M17.500 184.500v3M17.500 191.500v3M19.500 189.500h4" stroke="#444" stroke-width="0.900"/>
<path d="M88.5 189.5h9.5v-6.0h-3.0l-1.400-1.800h-3.5l-1 1.800z" fill="url(#gfd)" stroke="#c8a35a" stroke-width="0.900"/>
<path d="M91.5 193.5h10.5v-6.5h-4.0l-1.400-1.800h-3.5l-1 1.800z" fill="url(#gfd)" stroke="#c8a35a" stroke-width="0.900"/>
<path d="M95.5 199.0h11.0v-7.5h-4.5l-1.400-1.800h-3.5l-1 1.800z" fill="url(#gfd)" stroke="#c8a35a" stroke-width="0.900"/>
<path d="M200.5 197.5h16.0v-12.0h-9.5l-1.400-1.800h-3.5l-1 1.800z" fill="url(#gfd)" stroke="#c8a35a" stroke-width="0.900"/>
<path d="M208.500 187.800v6.400M205.300 191h6.400M206.300 188.800l4.400 4.400M210.700 188.800l-4.400 4.400" stroke="#1d5f86" stroke-width="0.900"/>
<path d="M18 214h9l-4.500 6.800z" fill="#8a8a8a"/>
<path d="M18 604h9l-4.500 6.800z" fill="#8a8a8a"/>
<path d="M36.500 259v8M51.500 259v8M37 262h14" stroke="#444" stroke-width="1"/><path d="M37 262l2.800-1.800v3.600zM51 262l-2.800-1.800v3.600z" fill="#444"/>
<path d="M46 287.5h5.500M46 289.5h5.500M40 291.5h11.500M40 293.5h11.500M40 295.5h11.500" stroke="#6e6e6e" stroke-width="1"/>
<path d="M46 311.5h5.500M46 313.5h5.500M40 315.5h11.500M40 317.5h11.500M40 319.5h11.500" stroke="#6e6e6e" stroke-width="1"/>
<path d="M46 335.5h5.500M46 337.5h5.500M40 339.5h11.500M40 341.5h11.500M40 343.5h11.500" stroke="#6e6e6e" stroke-width="1"/>
<path d="M46 359.5h5.500M46 361.5h5.500M40 363.5h11.500M40 365.5h11.500M40 367.5h11.500" stroke="#6e6e6e" stroke-width="1"/>
<path d="M46 383.5h5.500M46 385.5h5.500M40 387.5h11.500M40 389.5h11.500M40 391.5h11.500" stroke="#6e6e6e" stroke-width="1"/>
<path d="M46 407.5h5.500M46 409.5h5.500M40 411.5h11.500M40 413.5h11.500M40 415.5h11.500" stroke="#6e6e6e" stroke-width="1"/>
<path d="M46 431.5h5.500M46 433.5h5.500M40 435.5h11.500M40 437.5h11.500M40 439.5h11.500" stroke="#6e6e6e" stroke-width="1"/>
<path d="M46 455.5h5.500M46 457.5h5.500M40 459.5h11.500M40 461.5h11.500M40 463.5h11.500" stroke="#6e6e6e" stroke-width="1"/>
<rect x="40.500" y="476.500" width="6" height="6" fill="#fff" stroke="#444" stroke-width="0.900"/><path d="M43.500 482.500v4" stroke="#444"/><path d="M39 490.500l4.500-4 4.500 4z" fill="#333"/>
<rect x="424.500" y="601.500" width="4.200" height="15.500" rx="1" fill="url(#ghm)" stroke="#a87a2c" stroke-width="0.600"/>
<path d="M421.500 603.500c0-2.400 2-4.400 5-4.400h4.500l1.500 1.600v2.600h-6.500l-1.800.8z" fill="#6b7076"/>
<rect x="434" y="609.500" width="3.400" height="7.500" rx="1" fill="url(#ghm)" stroke="#a87a2c" stroke-width="0.600"/><rect x="435" y="598.500" width="1.400" height="11" fill="#666"/>
<path d="M447.500 606.600h7l-3.500 3.800z" fill="#555"/>
<path d="M465.500 598.500h11l4 4v15h-15z" fill="url(#gpg)" stroke="#9aa0a6" stroke-width="0.900"/><path d="M476.500 598.500v4h4z" fill="#e3edf3" stroke="#9aa0a6" stroke-width="0.700"/>
<g fill="#fff" stroke="#666" stroke-width="0.700"><circle cx="469.500" cy="605.600" r="1"/><circle cx="469.500" cy="609.400" r="1"/><circle cx="469.500" cy="613.200" r="1"/></g><path d="M472.300 605.600h5M472.300 609.400h5M472.300 613.200h5" stroke="#666" stroke-width="0.800"/>
<path d="M489.500 606.600h7l-3.500 3.800z" fill="#555"/>
<g fill="none" stroke="#c9c9c9" stroke-width="0.900"><rect x="510.500" y="598.500" width="4" height="4"/><rect x="510.500" y="605.500" width="4" height="4"/><rect x="510.500" y="612.500" width="4" height="4"/><rect x="518.500" y="605.500" width="4" height="4"/><path d="M512.500 602.500v3M512.500 609.500v3M514.500 607.500h4M519 599v17M523 599h5.500v12"/></g>
<ellipse cx="525" cy="613" rx="4.600" ry="2.600" fill="#f0f1f3" stroke="#a8a8a8" stroke-width="1"/><circle cx="525" cy="613" r="1.300" fill="#a8a8a8"/><path d="M519.800 607.800l10 9.600" stroke="#8e8e8e" stroke-width="0.900"/>
<path d="M17.500 632.500l2.500-3h10v8.500l-2.500 3h-10z" fill="#7fd0ee" stroke="#1f86b6" stroke-width="0.900" stroke-linejoin="round"/><path d="M17.500 632.500h10v8.500M27.500 632.500l2.500-3" fill="none" stroke="#1f86b6" stroke-width="0.900"/><path d="M18 633h9.200v7.600h-9.200z" fill="#b8e6f8"/><path d="M28 632.700l1.800-2.200v7.200l-1.800 2.200z" fill="#3da8d6"/>
<path d="M39.800 654.2h10.800l-3.400 7.600h-10.800z" fill="#fff" stroke="#86662a" stroke-width="1.200"/>
<path d="M39.800 678.2h10.800l-3.400 7.600h-10.800z" fill="#fff" stroke="#86662a" stroke-width="1.200"/>
<path d="M39.800 702.2h10.800l-3.400 7.600h-10.800z" fill="#fff" stroke="#86662a" stroke-width="1.200"/>
<path d="M36 730.300h11.400M40 723.800l6.600 14.400M46.600 723.800l-6.600 14.400" stroke="#86662a" stroke-width="1.100" fill="none"/>
<path d="M22.300 750.8l6.400 4.200-6.400 4.200z" fill="#8a8a8a"/>
<path d="M36.300 751.6l4.600-4.800h10.600v9.600l-4.600 4.800h-10.600z" fill="#eef1f3" stroke="#9a9ea2" stroke-width="0.900" stroke-linejoin="round"/>
<path d="M36.300 751.6l4.600-4.800h10.600l-4.600 4.800z" fill="#7cc6e6"/>
<path d="M46.900 751.6l4.600-4.800v9.600l-4.600 4.800z" fill="#bfe3f3" stroke="#9a9ea2" stroke-width="0.600"/>
<path d="M22.300 774.8l6.400 4.200-6.400 4.200z" fill="#8a8a8a"/>
<path d="M36.300 775.6l4.600-4.800h10.600v9.600l-4.600 4.800h-10.600z" fill="#eef1f3" stroke="#9a9ea2" stroke-width="0.900" stroke-linejoin="round"/>
<path d="M36.300 775.6l4.600-4.800h10.600l-4.600 4.800z" fill="#7cc6e6"/>
<path d="M46.900 775.6l4.600-4.800v9.600l-4.600 4.800z" fill="#bfe3f3" stroke="#9a9ea2" stroke-width="0.600"/>
<rect x="36.500" y="795.7" width="9.600" height="5.600" fill="#fef4dc" stroke="#8a8a8a" stroke-width="0.900"/><path d="M46.200 798.7h5.200l-5.200 10" fill="none" stroke="#444" stroke-width="0.900"/><path d="M44.600 810.0l.800-3.400 2.400 1.800z" fill="#333"/>
<rect x="36.500" y="819.7" width="9.600" height="5.600" fill="#fef4dc" stroke="#8a8a8a" stroke-width="0.900"/><circle cx="43.200" cy="823.4" r="2.800" fill="#cacaca" stroke="#444" stroke-width="0.800"/><path d="M40.400 823.4h5.600" stroke="#444" stroke-width="0.800"/><path d="M46.200 822.7h5.200l-5.200 10" fill="none" stroke="#444" stroke-width="0.900"/><path d="M44.600 834.0l.800-3.400 2.400 1.800z" fill="#333"/>
<rect x="36.500" y="891.7" width="9.600" height="5.600" fill="#fef4dc" stroke="#8a8a8a" stroke-width="0.900"/><path d="M46.200 894.7h5.200l-5.200 10" fill="none" stroke="#444" stroke-width="0.900"/><path d="M44.600 906.0l.800-3.400 2.400 1.800z" fill="#333"/>
<rect x="36.500" y="915.7" width="9.600" height="5.600" fill="#fef4dc" stroke="#8a8a8a" stroke-width="0.900"/><path d="M46.200 918.7h5.200l-5.200 10" fill="none" stroke="#444" stroke-width="0.900"/><path d="M44.600 930.0l.800-3.400 2.400 1.800z" fill="#333"/>
<path d="M38.3 844.1l4.2 4.2M42.5 844.1l-4.2 4.2M46.3 846.5l4.2 4.2M50.5 846.5l-4.2 4.2M36.2 852.6l4.2 4.2M40.4 852.6l-4.2 4.2" stroke="#86662a" stroke-width="1.100" fill="none"/>
<path d="M38.3 868.1l4.2 4.2M42.5 868.1l-4.2 4.2M46.3 870.5l4.2 4.2M50.5 870.5l-4.2 4.2M36.2 876.6l4.2 4.2M40.4 876.6l-4.2 4.2" stroke="#86662a" stroke-width="1.100" fill="none"/>
<path d="M39 945h4.600v-3.400l5.400 5.400-5.400 5.400v-3.400h-4.600z" fill="#1f9a1f" stroke="#0d5f0d" stroke-width="0.700"/>
</svg>
<div class="t" style="left:35.800px;top:720px;font-size:7.500px;font-weight:bold;color:#333;line-height:8px;height:8px">y</div>
<div class="t" style="left:35.800px;top:732px;font-size:7.500px;font-weight:bold;color:#333;line-height:8px;height:8px">z</div>
<div class="t" style="left:48.800px;top:725px;font-size:7.500px;font-weight:bold;color:#333;line-height:8px;height:8px">x</div>
<div class="t" style="left:37.200px;top:280px;font-size:9.500px;color:#333;line-height:10px;height:10px">A</div>
<div class="t" style="left:37.200px;top:304px;font-size:9.500px;color:#333;line-height:10px;height:10px">A</div>
<div class="t" style="left:37.200px;top:328px;font-size:9.500px;color:#333;line-height:10px;height:10px">A</div>
<div class="t" style="left:37.200px;top:352px;font-size:9.500px;color:#333;line-height:10px;height:10px">A</div>
<div class="t" style="left:37.200px;top:376px;font-size:9.500px;color:#333;line-height:10px;height:10px">A</div>
<div class="t" style="left:37.200px;top:400px;font-size:9.500px;color:#333;line-height:10px;height:10px">A</div>
<div class="t" style="left:37.200px;top:424px;font-size:9.500px;color:#333;line-height:10px;height:10px">A</div>
<div class="t" style="left:37.200px;top:448px;font-size:9.500px;color:#333;line-height:10px;height:10px">A</div>
<div class="t c" style="left:38.500px;top:476px;width:10px;font-size:5.500px;color:#222;line-height:7px;height:7px">A</div>
<!-- graphics viewport -->
<div class="a" style="left:542px;top:175px;width:1281px;height:826px;background:#e9ebef"></div>
<svg class="a" style="left:542px;top:175px;overflow:hidden" width="1281" height="796" viewBox="542 175 1281 796">
<!-- model faces -->
<polygon points="784,513 1351.300,318 1427.600,538.800 858.100,734.800" fill="#a7b4c4"/>
<polygon points="892,374.200 1178.800,276 1212,372.200 924.200,471.200" fill="#a7b4c4"/>
<polygon points="924.200,471.200 1210.600,372.200 1263.600,524 977.800,623.600" fill="#747e8a"/>
<polygon points="858.100,734.800 1427.600,538.800 1497.500,744.400 930.800,940" fill="#747e8a"/>
<!-- thin side faces -->
<polygon points="1351.500,318 1427.900,538.800 1497.700,744.400 1496.300,744.800 1425.100,539.200 1350.900,318.400" fill="#58616c"/>
<path d="M1178.800 276L1263.600 524" stroke="#4d555f" stroke-width="1" stroke-opacity="0.800" fill="none"/>
<!-- csys -->
<path d="M1095.400 496.600l-6.600-16.700" stroke="#2fd13a" stroke-width="1.200"/>
<path d="M1095.400 496.600l22.200-7.200" stroke="#e03030" stroke-width="1.200"/>
<path d="M1095.400 496.600l4 14.100" stroke="#22e0e8" stroke-width="1.200"/>
<circle cx="1088.800" cy="479.900" r="2.600" fill="#2fe040"/>
<circle cx="1117.600" cy="489.400" r="1.900" fill="#e83838"/>
<circle cx="1099.400" cy="510.700" r="3.400" fill="#22e6ee"/>
<!-- dimension & leaders -->
<g stroke="#2b0a5c" stroke-width="1.100" fill="none">
<path d="M721.200 329.100L919 261"/>
<path d="M1042.700 219L1172 174.500"/>
<path d="M719.600 324.500L783.300 512"/>
<path d="M1303.300 174L1351.600 317.500"/>
<path d="M931.200 299L956 368.500"/>
<path d="M1081 337L1105.600 408"/>
<path d="M1382.500 484.700L1481.600 435.600L1498.500 430.700"/>
</g>
<circle cx="1382.500" cy="484.700" r="1.300" fill="#2b0a5c"/>
<!-- red mark-up ellipses -->
<g fill="none" stroke="#f62f2f" stroke-width="2.900">
<ellipse cx="1006" cy="351" rx="24.500" ry="16.800"/>
<ellipse cx="1116" cy="316.800" rx="36" ry="17"/>
<ellipse cx="1215.700" cy="337.600" rx="19.500" ry="20"/>
<ellipse cx="1318" cy="460.800" rx="21.200" ry="25.600"/>
<ellipse cx="1193.300" cy="573.900" rx="17.200" ry="20.800"/>
</g>
<!-- annotation texts -->
<g fill="#2b0a5c" font-family="'Liberation Mono','Noto Sans CJK SC',monospace">
<text transform="translate(929,262.500) rotate(-19)" font-size="13.500" letter-spacing="2.500" style="font-family:'Liberation Mono',monospace">474.53±0.01</text>
<text transform="translate(999,358) rotate(-12)" font-size="9.500" style="font-family:'Noto Serif CJK SC',serif;font-weight:700">你好</text>
<text transform="translate(1090,327) rotate(-12)" font-size="11" letter-spacing="3" style="font-family:'Liberation Mono',monospace">32~~</text>
<text transform="translate(1203,343) rotate(-8)" font-size="10.500" style="font-family:'Noto Serif CJK SC',serif;font-weight:700">年后</text>
<text transform="translate(1304,466) rotate(-10)" font-size="9" style="font-family:'Noto Serif CJK SC',serif;font-weight:700">哈哒</text>
<text transform="translate(1182,579) rotate(-8)" font-size="9" style="font-family:'Noto Serif CJK SC',serif;font-weight:700">你是</text>
<text transform="translate(1500,433) rotate(-15)" font-size="9.500" style="font-family:'Noto Serif CJK SC',serif;font-weight:700">你好啊</text>
</g>
<!-- tolerance table -->
<g fill="#9a9fa9" font-size="14" style="font-family:'Liberation Mono',monospace" letter-spacing="-1">
<text x="1729" y="919">X.X+-0.1</text>
<text x="1721.500" y="933.500">X.XX+-0.01</text>
<text x="1714" y="948">X.XXX+-0.001</text>
<text x="1721.500" y="962.500">ANG.+-0.5</text>
</g>
</svg>
<!-- in-graphics toolbar -->
<div class="a" style="left:1034px;top:182px;width:298px;height:32px;background:#f8f8f8;border:1px solid #b4b4b4"></div>
<div class="a" style="left:1277px;top:186px;width:23px;height:23px;background:#dcdcdc;border:1px solid #b6b6b6"></div>
<div class="a" style="left:1303px;top:186px;width:23px;height:23px;background:#dcdcdc;border:1px solid #b6b6b6"></div>
<svg class="a" style="left:1034px;top:182px" width="298" height="32" viewBox="1034 182 298 32">
<defs>
<linearGradient id="glass" x1="0" y1="0" x2="1" y2="1"><stop offset="0" stop-color="#ffffff"/><stop offset="1" stop-color="#cfe7f3"/></linearGradient>
<linearGradient id="grep" x1="0" y1="0" x2="1" y2="1"><stop offset="0" stop-color="#ffffff"/><stop offset="0.55" stop-color="#dff0f7"/><stop offset="1" stop-color="#3b9cc4"/></linearGradient>
<radialGradient id="gsph" cx="0.35" cy="0.3" r="0.8"><stop offset="0" stop-color="#ffffff"/><stop offset="0.6" stop-color="#d9d9d9"/><stop offset="1" stop-color="#8c8c8c"/></radialGradient>
<linearGradient id="gcb" x1="0" y1="0" x2="1" y2="0"><stop offset="0" stop-color="#6a6a6a"/><stop offset="1" stop-color="#f4f4f4"/></linearGradient>
</defs>
<!-- refit -->
<rect x="1042.500" y="189.500" width="14" height="13.500" fill="#f4f4f4" stroke="#9d9d9d"/>
<circle cx="1048.800" cy="195.600" r="4.200" fill="url(#glass)" stroke="#2a8fc0" stroke-width="1.100"/>
<path d="M1052 199l4.600 4.800" stroke="#9a9a9a" stroke-width="2.200" stroke-linecap="round"/>
<!-- zoom in -->
<circle cx="1073.800" cy="194.800" r="5" fill="url(#glass)" stroke="#2a8fc0" stroke-width="1.200"/>
<path d="M1071 194.800h5.600M1073.800 192v5.600" stroke="#1a5e86" stroke-width="1.500"/>
<path d="M1077.600 199l5 5" stroke="#9a9a9a" stroke-width="2.300" stroke-linecap="round"/>
<!-- zoom out -->
<circle cx="1099.800" cy="194.800" r="5" fill="url(#glass)" stroke="#2a8fc0" stroke-width="1.200"/>
<path d="M1097 194.800h5.600" stroke="#1a5e86" stroke-width="1.500"/>
<path d="M1103.600 199l5 5" stroke="#9a9a9a" stroke-width="2.300" stroke-linecap="round"/>
<!-- repaint -->
<rect x="1120.500" y="189.500" width="15" height="14.500" fill="url(#grep)" stroke="#9d9d9d"/>
<path d="M1121 190h14" stroke="#8a8a8a" stroke-width="1.400"/>
<path d="M1124 203.500c4-1 8-5 10.500-10.500" fill="none" stroke="#1d6b94" stroke-width="1.400"/>
<!-- shading -->
<path d="M1153 190.500h8.500v8.500h-8.500z" fill="url(#gcb)"/>
<path d="M1153 190.500l1.500-1.500h8.500l-1.500 1.500z" fill="#e9e9e9"/>
<circle cx="1151.600" cy="199.600" r="5" fill="url(#gsph)"/>
<path d="M1165 204.500v3h-3z" fill="#555"/>
<!-- cube -->
<path d="M1173.500 192.500l3-3h11.500v11.500l-3 3h-11.500z" fill="#fff" stroke="#4aa6d2" stroke-width="1" stroke-linejoin="round"/>
<path d="M1173.500 192.500l3-3h11.500l-3 3z" fill="#a8d9ef"/><path d="M1185 192.500l3-3v11.500l-3 3z" fill="#6fbde0"/>
<path d="M1192 204.500v3h-3z" fill="#555"/>
<!-- cube + list -->
<path d="M1200.500 192.500l3-3h11v10l-3 3h-11z" fill="#fff" stroke="#7fc3e4" stroke-width="1" stroke-linejoin="round"/>
<path d="M1200.500 192.500l3-3h11l-3 3z" fill="#c4e6f5"/><path d="M1211.500 192.500l3-3v10l-3 3z" fill="#9fd3ec"/>
<rect x="1208.500" y="197.500" width="6.600" height="8" fill="#fff" stroke="#8a8a8a" stroke-width="0.800"/>
<path d="M1210 200h4M1210 202h4M1210 204h4" stroke="#777" stroke-width="0.700"/>
<path d="M1219 204.500v3h-3z" fill="#555"/>
<!-- table + camera -->
<rect x="1227.500" y="189.500" width="13" height="13.500" fill="#fdfdfd" stroke="#a6a6a6" stroke-width="0.900"/>
<path d="M1227.500 192.500h13M1227.500 196h13M1227.500 199.500h13M1231.500 192.500v10.500" stroke="#a6a6a6" stroke-width="0.800"/>
<rect x="1232.600" y="198.500" width="10.400" height="7.400" rx="1" fill="#3a3a3a"/><rect x="1235.500" y="197.200" width="4.500" height="2" fill="#3a3a3a"/>
<circle cx="1237.800" cy="202.200" r="2.500" fill="#1a1a1a" stroke="#c9c9c9" stroke-width="0.800"/>
<!-- datum display -->
<g stroke="#86662a" stroke-width="1.200" fill="none"><path d="M1253.500 189.500l3.600 3.600M1257.100 189.500l-3.600 3.600"/><path d="M1262.500 189l-2 4.500M1259.500 196l-2 4.500M1256.700 202.500l-1.600 3.600"/><path d="M1262.200 201.400h8M1264.200 196.500l4 10M1268.600 196.500l-5 10"/></g>
<path d="M1272.500 204.500v3h-3z" fill="#555"/>
<!-- annotation display -->
<rect x="1281.500" y="190.500" width="9" height="5.600" fill="#fef4dc" stroke="#8a8a8a" stroke-width="0.900"/>
<path d="M1290.500 193.500h5v3.500" fill="none" stroke="#444" stroke-width="0.900"/><path d="M1293 196.400h5l-2.500 3z" fill="#333"/>
<ellipse cx="1291.500" cy="203" rx="4.400" ry="2.400" fill="#fff" stroke="#444" stroke-width="1"/><circle cx="1291.500" cy="203" r="1.300" fill="#333"/>
<!-- tree -->
<path d="M1310.500 192.700l4.200 5 5 0M1309.600 202.700l5.100-5" stroke="#555" stroke-width="1.200" fill="none"/>
<circle cx="1310.500" cy="192.700" r="2.300" fill="#5aa65a"/><circle cx="1309.600" cy="202.700" r="2.300" fill="#3f8fc0"/><circle cx="1319.700" cy="197.700" r="2.300" fill="#e06a5a"/>
</svg>
<!-- view tab strip under graphics -->
<div class="a" style="left:542px;top:971px;width:1281px;height:1px;background:#9c9c9c"></div>
<div class="a" style="left:542px;top:972px;width:1281px;height:4px;background:#f4f4f4"></div>
<div class="a" style="left:542px;top:975px;width:1281px;height:25px;background:#dedede;border-top:1px solid #b2b2b2;border-left:1px solid #b2b2b2"></div>
<div class="a" style="left:638px;top:972px;width:92px;height:27px;background:#f4f4f4;border-left:1px solid #e4e4e4;border-right:1px solid #c8c8c8"></div>
<div class="a" style="left:617px;top:977px;width:21px;height:17px;background:#e6e6e6;border:1px solid #9a9a9a;border-right:none"></div>
<div class="t c" style="left:640px;top:977px;width:88px;font-weight:500;color:#2e2e2e">全部默认 *</div>
<div class="t c" style="left:618px;top:978px;width:20px;font-weight:bold;color:#444;font-size:14px">+</div>
<svg class="a" style="left:542px;top:976px" width="80" height="24" viewBox="542 976 80 24">
<path d="M552.500 983.300v8.400l-5.500-4.200zM558 983.300v8.400l-5.500-4.200z" fill="#555"/>
<path d="M574 983v9l-7.600-4.500z" fill="#ababab"/>
<path d="M582.500 983v9l7.600-4.500z" fill="#ababab"/>
<path d="M598.500 983.300v8.400l5.500-4.200zM604 983.300v8.400l5.500-4.200z" fill="#555"/>
</svg>
<!-- status bar -->
<div class="a" style="left:4px;top:1000px;width:1819px;height:3px;background:linear-gradient(#8f8f8f,#a8a8a8)"></div>
<div class="a" style="left:4px;top:1003px;width:1819px;height:33px;background:#f0f1f3"></div>
<div class="a" style="left:10px;top:1010px;width:22px;height:22px;background:#e2e2e2;border:1px solid #c4c4c4"></div>
<div class="sep" style="left:93px;top:1010px;height:22px;background:#b9b9b9"></div>
<div class="sep" style="left:1422px;top:1006px;height:27px;background:#c6c6c6"></div>
<div class="sep" style="left:1483px;top:1006px;height:27px;background:#c6c6c6"></div>
<div class="sep" style="left:1530px;top:1006px;height:27px;background:#c6c6c6"></div>
<div class="a" style="left:1486px;top:1007px;width:42px;height:23px;background:#fdfdfd;border:1px solid #c6c6c6"></div>
<div class="a" style="left:1513px;top:1007px;width:1px;height:23px;background:#c6c6c6"></div>
<div class="a" style="left:1628px;top:1007px;width:177px;height:24px;background:#fdfdfd;border:1px solid #c6c6c6"></div>
<div class="a" style="left:1789px;top:1008px;width:1px;height:22px;background:#d0d0d0"></div>
<div class="t" style="left:110px;top:1010px;color:#444;font-size:11px">基准平面将不显示。</div>
<div class="t" style="left:1636px;top:1011px;color:#444">几何</div>
<svg class="a" style="left:4px;top:1003px" width="1819" height="33" viewBox="4 1003 1819 33">
<defs><radialGradient id="gglobe" cx="0.4" cy="0.35" r="0.75"><stop offset="0" stop-color="#8fd4f5"/><stop offset="1" stop-color="#1a7fc4"/></radialGradient>
<linearGradient id="gsq" x1="0" y1="0" x2="0" y2="1"><stop offset="0" stop-color="#ffffff"/><stop offset="1" stop-color="#c3d9e4"/></linearGradient>
<linearGradient id="gbino" x1="0" y1="0" x2="1" y2="0"><stop offset="0" stop-color="#222"/><stop offset="0.5" stop-color="#888"/><stop offset="1" stop-color="#222"/></linearGradient></defs>
<g fill="#fff" stroke="#333" stroke-width="1.100"><rect x="18.500" y="1013.500" width="3.400" height="3.400"/><rect x="18.500" y="1019.500" width="3.400" height="3.400"/><rect x="18.500" y="1025.500" width="3.400" height="3.400"/><rect x="25.500" y="1019.500" width="3.400" height="3.400"/></g>
<path d="M20.200 1017v2.500M20.200 1023v2.500M22 1021.200h3.500" stroke="#333" stroke-width="0.900"/>
<circle cx="47" cy="1021" r="6.600" fill="url(#gglobe)"/>
<path d="M43 1018c2-1 3 1 2 2.500s1 2 2.500 1 2.500 1 1 3" fill="none" stroke="#c9ecfb" stroke-width="1.600"/>
<ellipse cx="47" cy="1021" rx="9.600" ry="4.200" fill="none" stroke="#444" stroke-width="1" transform="rotate(-40 47 1021)"/>
<rect x="65.800" y="1013.800" width="14.400" height="14.400" rx="1.200" fill="url(#gsq)" stroke="#1e6f9c" stroke-width="1.200"/>
<circle cx="102.400" cy="1017.500" r="2.500" fill="#14587c"/>
<!-- regenerate small -->
<rect x="1427.500" y="1020.500" width="6" height="6" fill="#fff" stroke="#2d8fc4" stroke-width="1"/>
<path d="M1431.500 1016.500l3-3.600 1.200 1.500 2.400-2.700M1441.500 1014l-3 3.600-1.200-1.500-2.400 2.700" fill="none" stroke="#1d5f86" stroke-width="1.500"/>
<path d="M1436 1010.500l3.200-.3-.5 3.200zM1437 1020.200l-3.200.3.700-3z" fill="#1d5f86"/>
<!-- binoculars -->
<path d="M1493 1026.500l1.600-10 1.400-3.500h3l.8 3.500h1.600l.8-3.500h3l1.400 3.500 1.600 10h-6l-.6-5h-2l-.6 5z" fill="url(#gbino)"/>
<path d="M1516.500 1016.500h7l-3.500 4z" fill="#555"/>
<path d="M1793.500 1016.500h7l-3.500 4z" fill="#666"/>
<path d="M1820 1023l-10 10M1820 1026.500l-6.500 6.500M1820 1030l-3 3" stroke="#c2c2c2" stroke-width="1"/>
</svg>
<!-- watermark overlay -->
<div class="a" style="left:1616px;top:975px;width:207px;height:61px;background:rgba(255,255,255,0.42)"></div>
<svg class="a" style="left:1616px;top:975px" width="207" height="61" viewBox="1616 975 207 61">
<ellipse cx="1639" cy="993.500" rx="22" ry="12.500" transform="rotate(38 1639 993.500)" fill="none" stroke="#8fa3b6" stroke-opacity="0.750" stroke-width="2.600"/>
<ellipse cx="1642" cy="1013.500" rx="15" ry="7.500" transform="rotate(-18 1642 1013.500)" fill="none" stroke="#a9b8c6" stroke-opacity="0.600" stroke-width="1.400"/>
<path d="M1663.500 994.500c8 1 12 9 8 19s-14 17-24 16.500" fill="none" stroke="#e8848c" stroke-opacity="0.850" stroke-width="3.200" stroke-linecap="round"/>
</svg>
<div class="t" style="left:1686px;top:976px;font-family:'Noto Serif CJK SC',serif;font-weight:900;font-size:28px;line-height:32px;height:32px;color:#86c9a1;letter-spacing:1.300px">野火论坛</div>
<div class="t" style="left:1673.500px;top:1011px;font-size:16.500px;line-height:20px;height:20px;color:#bfe1da;letter-spacing:-0.140px">www.proewildfire.cn</div>

</body></html>
